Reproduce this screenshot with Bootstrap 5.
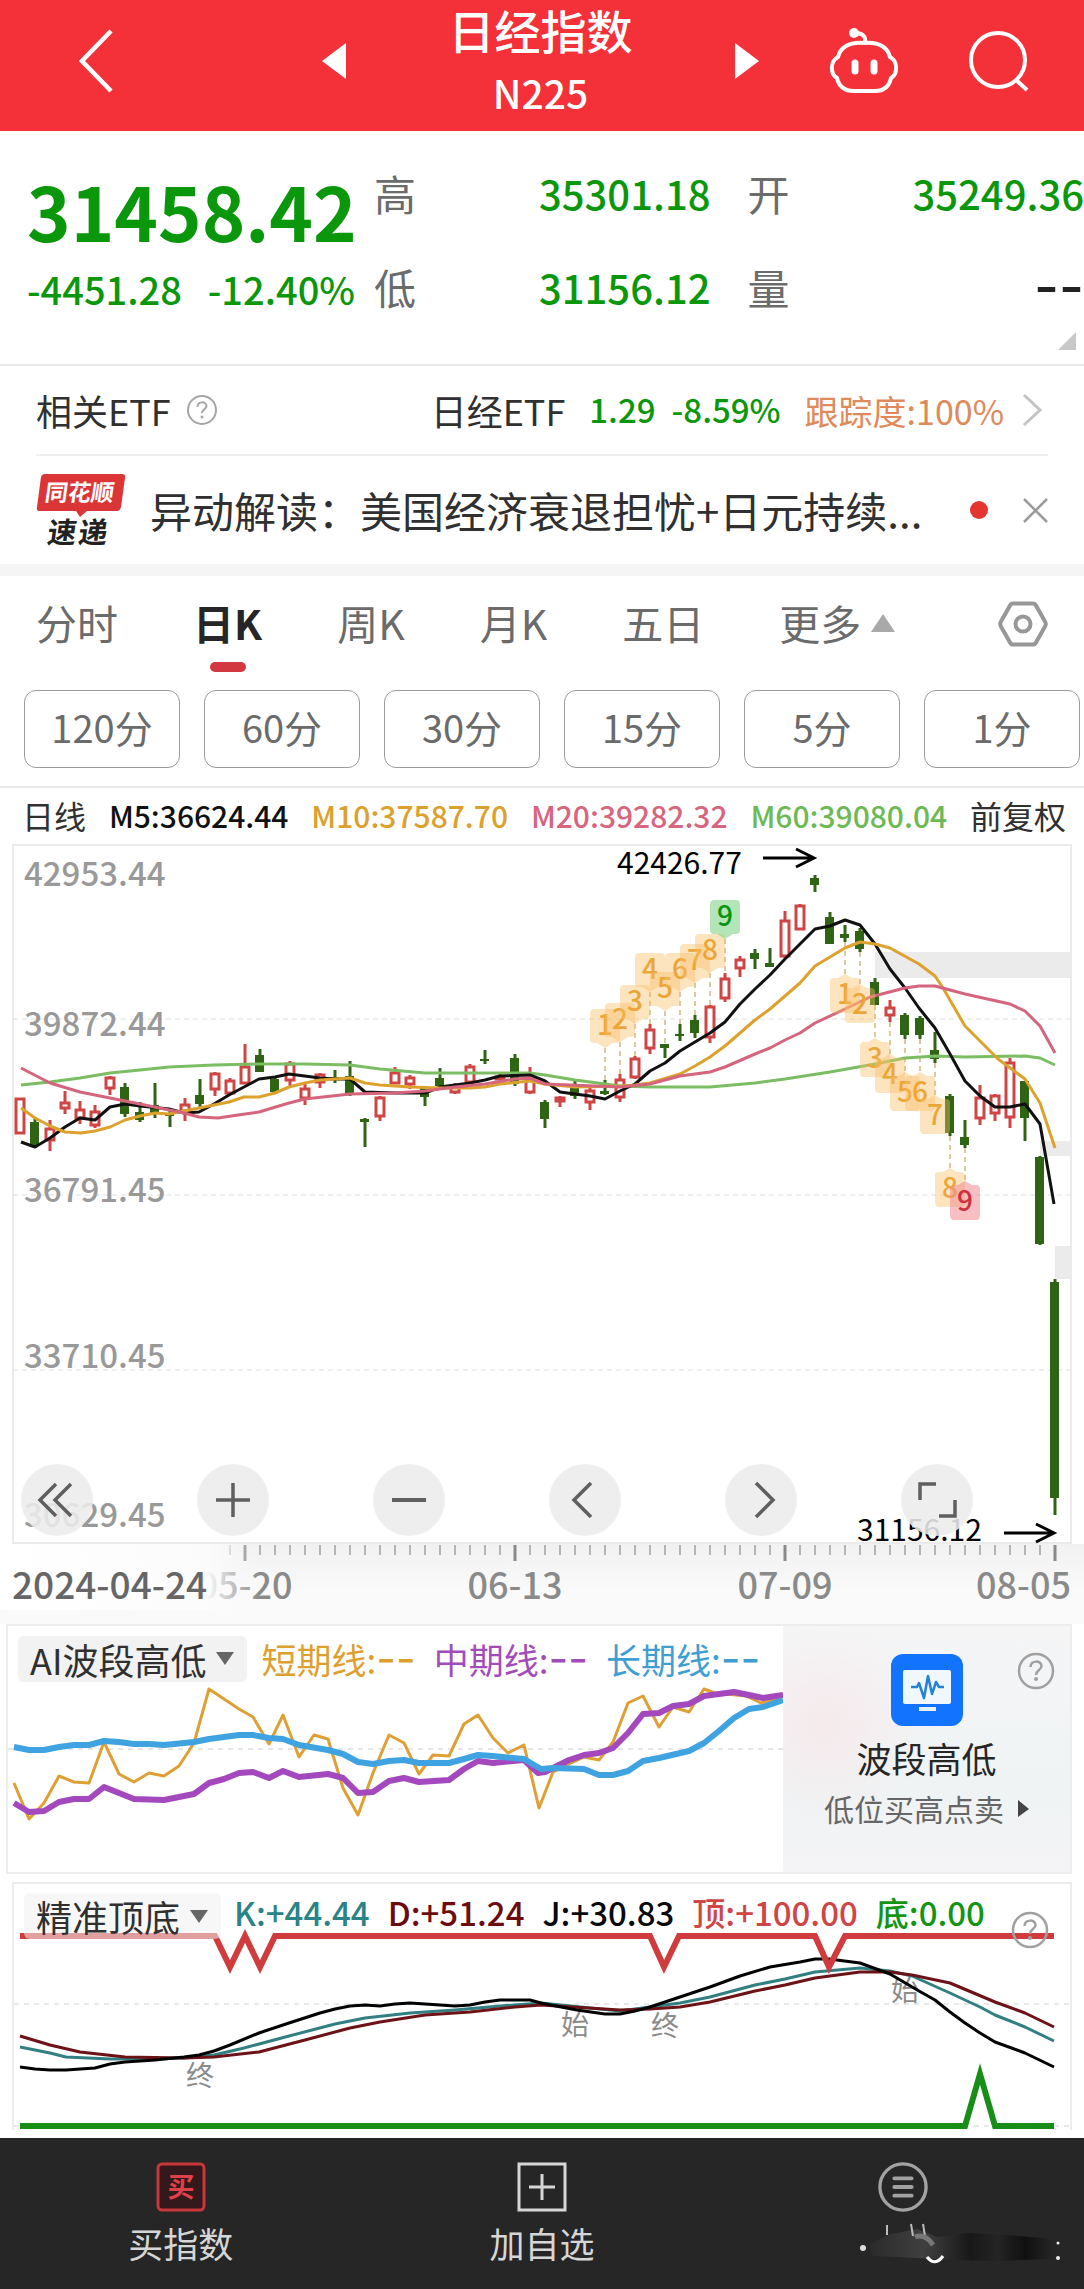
<!DOCTYPE html>
<html lang="zh-CN">
<head>
<meta charset="utf-8">
<meta name="viewport" content="width=device-width, initial-scale=1">
<title>日经指数 N225</title>
<link rel="stylesheet" href="https://cdn.jsdelivr.net/npm/bootstrap@5.3.0/dist/css/bootstrap.min.css">
<style>
:root{--up:#c9403f;--down:#0b970b;--ink:#303030;--soft:#6b6b6b;--rule:#e9e9e9}
body{font-family:"Noto Sans CJK SC","Noto Sans",sans-serif;color:var(--ink);background:#fff}
button{font-family:inherit}
.plain{border:0;background:none;padding:0;color:inherit;display:flex;align-items:center}
svg{display:block}
svg text{font-family:inherit}
.dashes{font-family:Inter,sans-serif;font-size:43px;font-weight:400}

.topbar{background:#f43039;color:#fff;height:131px;padding:0 55px 10px 79px;gap:70px}
.switcher{width:437px}
.idx-title{font-size:46px;line-height:62px;font-weight:500;margin:0}
.idx-code{font-size:39px;line-height:64px;font-weight:500}

.quote{height:235px;border-bottom:2px solid var(--rule);padding:15px 0 0 27px;position:relative}
.quote-left{width:347px}
.price{font-size:74px;line-height:80px;font-weight:700;color:var(--down);padding-top:24px}
.delta{font-size:38px;line-height:78px;font-weight:500;color:var(--down);width:328px}
.cells{gap:0 37px;display:grid;grid-template-columns:1fr 1fr;align-content:start}
.cell{line-height:94px;height:94px;display:flex;justify-content:space-between}
.cell dt{font-size:42px;font-weight:400;color:var(--soft)}
.cell dd{font-size:40px;font-weight:500;color:var(--down);margin:0}
.cell dd.none{color:#222;font-size:54px;font-weight:500}
.corner{position:absolute;right:8px;bottom:14px}

.etf{height:90px;margin:0 36px;padding-right:4px;font-size:36px;border-bottom:2px solid #f0f0f0;color:var(--ink)}
.etf .figure-num{font-size:33px;font-weight:500;color:var(--down)}
.etf .track{font-size:34px;color:#de8a5a}
.news{height:108px;padding:0 36px}
.headline{font-size:42px;line-height:60px;color:var(--ink);margin-left:24px;text-decoration:none}
.redspot{width:18px;height:18px;border-radius:50%;background:#e43530}
.band{height:12px;background:#f5f5f5}

.tabs{height:114px;padding:0 36px;font-size:41px;color:var(--soft)}
.tabset{gap:75px}
.tabset button{height:100px;padding-bottom:6px;position:relative;gap:10px}
.tabset .on{color:#262626;font-weight:700}
.tabset .on::after{content:"";position:absolute;left:50%;margin-left:-18px;bottom:4px;width:36px;height:10px;border-radius:5px;background:#d2383f}
.gear{height:96px}
.periods{gap:24px;padding:0 4px 18px 24px;border-bottom:2px solid var(--rule)}
.periods button{flex:1;height:78px;border:1px solid #9a9a9a;border-radius:12px;background:#fff;color:var(--soft);font-size:38px;line-height:72px;padding:0 0 4px}

.ma{height:56px;padding:0 18px 2px 22px;font-size:30px;font-weight:500}
.ma .name{font-size:32px;font-weight:400}
.c5{color:#111}.c10{color:#dca12c}.c20{color:#d7657f}.c60{color:#6dba55}
.kchart{position:relative}
.tools{position:absolute;left:21px;right:111px;bottom:8px}
.tools button{width:72px;height:72px;border:0;border-radius:50%;background:rgba(236,236,236,.88);padding:0;display:flex;align-items:center;justify-content:center}
.axis-strip{padding-bottom:14px;background:linear-gradient(#f1f1f1,#fafafa 60%)}

.pane{position:relative;border:2px solid #ededed;background:#fff}
.pane-ai{margin:0 12px 8px 6px}
.pane-ai .trend{flex:1 1 0;min-width:0}
.pane-kdj{margin:0 12px 8px 12px;border-bottom:0}
.legend-row{position:absolute;left:0;right:0;top:9px;padding-left:10px;white-space:nowrap}
.chip{border:0;border-radius:6px;background:rgba(238,238,238,.75);color:var(--ink);font-size:36px;line-height:46px;height:46px;padding:0 13px 0 12px;display:flex;align-items:center;gap:10px}
.chip.fade50{background:rgba(240,240,240,.55)}
.lines{font-size:35px;line-height:46px;gap:18px;margin-left:14px}
.lines2{font-size:33px;line-height:38px;font-weight:500;gap:18px;margin-left:13px}
.promo{flex:0 0 287px;background:radial-gradient(circle at 15% 40%,#f6eaec 0,rgba(246,234,236,0) 35%),linear-gradient(#f5f5f6,#eff3f4 65%,#f4f3f5);position:relative}
.promo a{color:#262626;text-decoration:none;padding-top:28px}
.promo .big{font-size:35px;line-height:52px;margin-top:6px}
.promo .sub{font-size:30px;line-height:48px;color:#666;gap:14px}
.help-ai{position:absolute;right:15px;top:26px}
.help-kdj{position:absolute;right:21px;top:27px}

.dock{background:#262626;height:153px;color:#d6d6d6}
.dock button{flex:1;flex-direction:column;font-size:35px;line-height:44px;padding-top:24px;gap:9px;justify-content:flex-start}
.smear{margin-left:118px}
</style>
<script src="https://cdn.jsdelivr.net/npm/bootstrap@5.3.0/dist/js/bootstrap.bundle.min.js"></script>
</head>
<body>
<header class="topbar d-flex align-items-center">
  <button class="plain me-auto" aria-label="返回"><svg width="34" height="66" viewBox="0 0 34 66"><path d="M32 3 3 33l29 30" fill="none" stroke="#fff" stroke-width="4.5"/></svg></button>
  <div class="switcher d-flex align-items-center justify-content-between">
    <button class="plain" aria-label="上一个"><svg width="24" height="36" viewBox="0 0 24 36"><path d="M24 0v36L0 18z" fill="#fff"/></svg></button>
    <div class="text-center"><h1 class="idx-title">日经指数</h1><div class="idx-code">N225</div></div>
    <button class="plain" aria-label="下一个"><svg width="24" height="36" viewBox="0 0 24 36"><path d="M0 0v36l24-18z" fill="#fff"/></svg></button>
  </div>
  <button class="plain" aria-label="智能助手"><svg width="70" height="66" viewBox="0 0 70 66" fill="none" stroke="#fff" stroke-width="4"><path d="M35 15C21 14 12 18 9 29c-8 4-8 17-1 21 2 9 8 13 17 13h21c9 0 14-4 16-13 7-4 7-17-1-21-3-11-12-15-26-14z"/><path d="M36 15c1-7-2-9-8-10"/><circle cx="25" cy="5" r="5" fill="#fff" stroke="none"/><path d="M26 35v8M45 35v8" stroke-width="7" stroke-linecap="round"/></svg></button>
  <button class="plain" aria-label="搜索"><svg width="60" height="62" viewBox="0 0 60 62" fill="none" stroke="#fff" stroke-width="4"><circle cx="29" cy="30" r="27"/><path d="m46 49 12 11"/></svg></button>
</header>

<section class="quote d-flex">
  <div class="quote-left">
    <div class="price">31458.42</div>
    <div class="delta d-flex justify-content-between"><span>-4451.28</span><span>-12.40%</span></div>
  </div>
  <dl class="cells flex-fill m-0">
    <div class="cell"><dt>高</dt><dd>35301.18</dd></div>
    <div class="cell"><dt>开</dt><dd>35249.36</dd></div>
    <div class="cell"><dt>低</dt><dd>31156.12</dd></div>
    <div class="cell"><dt>量</dt><dd class="none dashes">--</dd></div>
  </dl>
  <svg class="corner" width="18" height="18" viewBox="0 0 18 18"><path d="M18 0v18H0z" fill="#c8c8c8"/></svg>
</section>

<section class="etf d-flex align-items-center">
  <span>相关ETF</span>
  <svg class="ms-3" width="34" height="34" viewBox="0 0 34 34"><circle cx="15" cy="17" r="14" fill="none" stroke="#a5a5a5" stroke-width="2"/><path d="M10.500 14c0-6 9-6 9-1 0 3-4.500 3.500-4.500 7" fill="none" stroke="#a5a5a5" stroke-width="2"/><circle cx="15" cy="24" r="1.500" fill="#a5a5a5"/></svg>
  <span class="ms-auto">日经ETF</span>
  <span class="figure-num ms-4">1.29</span><span class="figure-num ms-3">-8.59%</span>
  <span class="track ms-4">跟踪度:100%</span>
  <svg class="ms-3" width="24" height="34" viewBox="0 0 24 34"><path d="m4 2 16 15L4 32" fill="none" stroke="#c4c4c4" stroke-width="3"/></svg>
</section>

<section class="news d-flex align-items-center">
  <svg width="90" height="74" viewBox="0 0 90 74" role="img" aria-label="同花顺速递">
    <path d="M9 1h77q4 0 3 4l-4 29q-1 4-4 4H51l-7 6-4-6H4q-4 0-3-4L5 4q1-3 4-3z" fill="#dc3537"/>
    <g transform="skewX(-8)"><text x="12" y="28" font-size="23" font-weight="700" fill="#fff">同花顺</text><text x="20" y="70" font-size="29" font-weight="700" fill="#222">速</text><text x="51" y="70" font-size="29" font-weight="700" fill="#222">递</text></g>
  </svg>
  <a href="#" class="headline text-nowrap">异动解读：美国经济衰退担忧+日元持续...</a>
  <span class="redspot ms-auto"></span>
  <button class="plain ms-4" aria-label="关闭"><svg width="36" height="36" viewBox="0 0 36 36"><path d="m12 7 23 23M35 7 12 30" stroke="#9a9a9a" stroke-width="2.500"/></svg></button>
</section>
<div class="band"></div>

<nav class="tabs d-flex align-items-start justify-content-between">
  <div class="tabset d-flex">
    <button class="plain">分时</button><button class="plain on">日K</button><button class="plain">周K</button><button class="plain">月K</button><button class="plain">五日</button>
    <button class="plain">更多<svg width="24" height="18" viewBox="0 0 24 18"><path d="M12 0l12 18H0z" fill="#a9a9a9"/></svg></button>
  </div>
  <button class="plain gear" aria-label="设置"><svg width="50" height="46" viewBox="0 0 50 46" fill="none" stroke="#979797" stroke-width="4"><path d="M15 2.500h20q2 0 3 2l9 16q1.500 2.500 0 5l-9 16q-1 2-3 2H15q-2 0-3-2L3 25.500q-1.500-2.500 0-5l9-16q1-2 3-2z"/><circle cx="25" cy="23" r="7.500"/></svg></button>
</nav>
<div class="periods d-flex">
  <button>120分</button><button>60分</button><button>30分</button><button>15分</button><button>5分</button><button>1分</button>
</div>

<div class="ma d-flex align-items-center justify-content-between text-nowrap">
  <span class="name">日线</span><span class="c5">M5:36624.44</span><span class="c10">M10:37587.70</span><span class="c20">M20:39282.32</span><span class="c60">M60:39080.04</span><span class="name">前复权</span>
</div>

<section class="kchart">
  <svg id="kline" class="w-100" viewBox="0 843 1084 700">
    <rect x="13" y="844" width="1058" height="698" fill="#fff" stroke="#ebebeb" stroke-width="2"/>
    <g fill="#ebebeb"><rect x="875" y="951" width="196" height="26"/><rect x="1040" y="1140" width="31" height="15"/><rect x="1055" y="1245" width="16" height="33"/></g>
    <path d="M13 1018H1071M13 1194H1071M13 1369H1071" stroke="#dedede" stroke-dasharray="5 4"/>
    <g font-size="33" font-weight="500" fill="#999"><text x="24" y="885">42953.44</text><text x="24" y="1035">39872.44</text><text x="24" y="1201">36791.45</text><text x="24" y="1367">33710.45</text><text x="24" y="1526">30629.45</text></g>
    <g id="leaders" stroke="#b9953f" stroke-dasharray="5 4"></g>
    <g id="candles"></g>
    <g fill="none" stroke-width="3" stroke-linejoin="round">
      <polyline stroke="#7bbd62" points="21,1084 50,1081 80,1077 110,1072 140,1069 169,1066 214,1064 259,1063 305,1063 350,1064 380,1068 425,1072 485,1072 530,1072 545,1074 575,1079 620,1085 650,1086 710,1086 755,1082 785,1078 830,1071 875,1063 905,1057 936,1055 965,1056 1025,1055 1040,1057 1055,1064"/>
      <polyline stroke="#111" points="21,1141 35,1146 50,1137 65,1126 80,1117 95,1119 110,1106 125,1103 140,1105 169,1108 184,1112 199,1111 214,1103 229,1094 244,1086 259,1078 275,1076 289,1073 320,1077 335,1078 350,1078 365,1091 395,1092 425,1092 440,1086 470,1082 485,1079 500,1075 530,1074 545,1080 560,1091 575,1093 590,1095 605,1098 620,1090 635,1083 650,1070 665,1062 680,1050 710,1032 725,1021 740,1003 755,988 770,974 785,958 800,943 815,928 830,925 845,919 860,924 875,943 890,968 905,987 919,1007 935,1027 950,1053 965,1080 980,1095 995,1106 1010,1106 1025,1103 1040,1123 1054,1203"/>
      <polyline stroke="#dda22e" points="21,1107 35,1117 50,1125 65,1131 81,1132 95,1130 110,1126 125,1119 140,1115 155,1112 169,1113 184,1110 199,1107 214,1104 229,1101 244,1096 259,1096 275,1092 289,1086 305,1082 320,1079 350,1077 365,1082 380,1084 410,1086 440,1087 470,1087 485,1086 500,1083 530,1080 545,1083 575,1086 620,1085 635,1084 650,1082 680,1073 695,1065 710,1056 725,1045 755,1019 770,1008 800,982 815,965 845,947 860,941 875,943 890,947 919,963 935,975 943,987 965,1025 998,1058 1025,1078 1040,1102 1055,1147"/>
      <polyline stroke="#d4657c" points="21,1067 50,1082 80,1091 110,1097 140,1103 169,1109 184,1112 199,1116 218,1117 238,1114 259,1111 289,1102 305,1098 350,1093 395,1092 425,1090 455,1086 485,1083 515,1078 530,1077 545,1083 620,1086 650,1083 680,1075 710,1071 725,1066 755,1053 770,1047 785,1039 800,1032 815,1022 845,1008 870,996 905,987 919,985 935,985 965,993 1010,1003 1025,1010 1040,1025 1055,1052"/>
    </g>
    <g id="flags" font-size="28" font-weight="500" text-anchor="middle"></g>
    <g font-size="30" fill="#000"><text x="617" y="873">42426.77</text><text x="857" y="1540">31156.12</text></g>
    <path d="M763 857h50M796 848l18 9-18 9M1004 1532h48M1036 1523l18 9-18 9" fill="none" stroke="#000" stroke-width="3"/>
  </svg>
  <div class="tools d-flex justify-content-between">
    <button aria-label="最早"><svg width="40" height="40" viewBox="0 0 40 40" fill="none" stroke="#5f5f5f" stroke-width="3.500"><path d="M19 4 3 20l16 16M34 4 18 20l16 16"/></svg></button>
    <button aria-label="放大"><svg width="40" height="40" viewBox="0 0 40 40" stroke="#5f5f5f" stroke-width="3.500"><path d="M3 20h34M20 3v34"/></svg></button>
    <button aria-label="缩小"><svg width="40" height="40" viewBox="0 0 40 40" stroke="#5f5f5f" stroke-width="4"><path d="M3 20h34"/></svg></button>
    <button aria-label="左移"><svg width="40" height="40" viewBox="0 0 40 40" fill="none" stroke="#5f5f5f" stroke-width="3.500"><path d="M26 3 9 20l17 17"/></svg></button>
    <button aria-label="右移"><svg width="40" height="40" viewBox="0 0 40 40" fill="none" stroke="#5f5f5f" stroke-width="3.500"><path d="m15 3 17 17-17 17"/></svg></button>
    <button aria-label="全屏"><svg width="40" height="40" viewBox="0 0 40 40" fill="none" stroke="#5f5f5f" stroke-width="3.500"><path d="M3 20V4h16M38 20v16H22"/></svg></button>
  </div>
</section>
<div class="axis-strip">
  <svg id="axis" class="w-100" viewBox="0 1543 1084 66">
    <defs><linearGradient id="veil"><stop offset="0" stop-color="#fff"/><stop offset=".8" stop-color="#fcfcfc" stop-opacity=".95"/><stop offset="1" stop-color="#f8f8f8" stop-opacity="0"/></linearGradient></defs>
    <g id="ticks" stroke="#b5b5b5" stroke-width="2"></g>
    <g font-size="36" font-weight="500" fill="#8a8a8a" text-anchor="middle"><text x="245" y="1598">05-20</text><text x="515" y="1598">06-13</text><text x="785" y="1598">07-09</text><text x="1071" y="1598" text-anchor="end">08-05</text></g>
    <rect x="0" y="1543" width="260" height="66" fill="url(#veil)"/>
    <text x="12" y="1598" font-size="37" font-weight="500" fill="#666">2024-04-24</text>
  </svg>
</div>

<section class="pane pane-ai d-flex">
  <svg class="trend" viewBox="8 1626 775 246">
    <path d="M8 1749H783" stroke="#e6e6ea" stroke-dasharray="5 5" stroke-width="2"/>
    <g fill="none" stroke-linejoin="round">
      <polyline stroke="#de9f35" stroke-width="3" points="14,1783 29,1819 44,1803 59,1776 74,1782 89,1783 104,1742 119,1774 134,1782 149,1773 164,1776 179,1766 194,1743 209,1689 239,1709 253,1717 269,1744 283,1715 299,1757 314,1735 328,1739 343,1788 358,1815 373,1773 389,1735 404,1743 419,1774 433,1755 449,1756 464,1724 478,1715 493,1738 508,1753 524,1745 539,1808 553,1772 569,1764 584,1757 599,1760 613,1742 628,1703 643,1696 659,1727 673,1707 689,1712 704,1689 715,1693 746,1696 761,1703 783,1697"/>
      <polyline stroke="#a349bd" stroke-width="6" points="14,1803 29,1812 44,1811 59,1802 74,1799 89,1799 104,1787 119,1793 134,1799 164,1800 194,1794 209,1783 224,1779 239,1773 253,1772 269,1778 283,1771 299,1777 328,1774 343,1778 358,1793 373,1792 389,1781 404,1778 419,1782 449,1780 464,1769 478,1761 493,1763 524,1760 538,1773 545,1772 569,1760 584,1755 599,1753 613,1748 628,1733 643,1714 659,1713 673,1706 689,1704 704,1696 734,1692 749,1695 763,1698 783,1695"/>
      <polyline stroke="#3ea3e0" stroke-width="6" points="14,1747 29,1750 44,1750 59,1747 74,1745 89,1745 104,1741 119,1742 134,1744 149,1744 164,1745 194,1742 209,1739 239,1735 253,1735 269,1738 283,1739 299,1745 328,1750 343,1754 358,1762 373,1764 389,1761 404,1760 419,1763 449,1763 464,1759 478,1755 493,1756 524,1759 541,1769 553,1768 584,1769 599,1775 613,1775 628,1771 643,1761 659,1758 689,1751 704,1743 719,1731 734,1718 749,1709 763,1707 783,1700"/>
    </g>
  </svg>
  <div class="legend-row d-flex align-items-center">
    <button class="chip">AI波段高低<svg width="18" height="13" viewBox="0 0 18 13"><path d="M0 0h18L9 13z" fill="#666"/></svg></button>
    <div class="lines d-flex"><span style="color:#dda02f">短期线:<span class="dashes">--</span></span><span style="color:#a24cba">中期线:<span class="dashes">--</span></span><span style="color:#3f9ed2">长期线:<span class="dashes">--</span></span></div>
  </div>
  <div class="promo">
    <a href="#" class="d-flex flex-column align-items-center text-nowrap">
      <svg width="72" height="72" viewBox="0 0 72 72"><rect width="72" height="72" rx="12" fill="#1273ff"/><rect x="12" y="16" width="48" height="34" rx="2" fill="#f1f8fd"/><path d="M20 33h6l2-4 5 15 4-22 4 18 4-12 3 5h5" fill="none" stroke="#2382d8" stroke-width="2.500" stroke-linejoin="round"/><rect x="28" y="53" width="17" height="4" fill="#e6f1ff"/></svg>
      <span class="big">波段高低</span>
      <span class="sub d-flex align-items-center">低位买高点卖<svg width="11" height="17" viewBox="0 0 11 17"><path d="M0 0v17L11 9z" fill="#444"/></svg></span>
    </a>
    <svg class="help-ai" width="38" height="38" viewBox="0 0 38 38"><circle cx="19" cy="19" r="17" fill="none" stroke="#a0a0a0" stroke-width="2.500"/><path d="M13.500 15c0-7 11-7 11-1 0 4-5.500 4-5.500 9" fill="none" stroke="#a0a0a0" stroke-width="2.500"/><circle cx="19" cy="27" r="2" fill="#a0a0a0"/></svg>
  </div>
</section>

<section class="pane pane-kdj">
  <svg class="w-100" viewBox="14 1884 1056 246">
    <path d="M14 2004H1070M14 2126H1070" stroke="#e8e8e8" stroke-dasharray="5 5" stroke-width="2"/>
    <g font-size="28" fill="#8b8b8b" text-anchor="middle"><text x="200" y="2086">终</text><text x="575" y="2035">始</text><text x="665" y="2036">终</text><text x="905" y="2001">始</text></g>
    <g fill="none" stroke-width="3" stroke-linejoin="round">
      <polyline stroke="#327f82" points="20,2047 50,2053 66,2057 110,2059 140,2059 184,2058 214,2055 244,2048 289,2036 335,2024 365,2018 410,2013 455,2010 500,2006 541,2003 620,2011 650,2007 680,2003 710,1997 755,1985 785,1979 815,1972 860,1968 890,1971 912,1976 950,1993 980,2007 995,2015 1025,2027 1054,2041"/>
      <polyline stroke="#6d1216" points="20,2036 50,2045 80,2052 125,2057 184,2058 214,2057 259,2052 305,2040 350,2028 380,2022 425,2015 470,2012 515,2007 541,2005 620,2010 650,2009 680,2007 710,2002 755,1991 785,1985 815,1978 860,1972 890,1972 912,1975 950,1983 995,2002 1025,2013 1054,2027"/>
      <polyline stroke="#000" points="20,2067 35,2069 50,2070 66,2070 95,2068 110,2064 125,2062 155,2060 184,2057 199,2055 214,2051 230,2045 259,2033 289,2023 320,2013 335,2009 350,2006 365,2005 380,2006 395,2004 410,2003 440,2005 455,2006 470,2005 485,2002 500,2000 530,2000 541,2003 556,2006 577,2010 605,2014 620,2014 635,2011 650,2007 680,1997 710,1987 740,1976 770,1967 800,1962 815,1959 829,1959 860,1963 890,1974 919,1991 935,2000 950,2012 965,2023 980,2033 995,2042 1025,2053 1054,2067"/>
    </g>
    <polyline fill="none" stroke="#d03c3d" stroke-width="6" points="20,1936 215,1936 230,1967 245,1936 260,1967 275,1936 650,1936 664,1967 679,1936 815,1936 829,1967 845,1936 1054,1936"/>
    <polyline fill="none" stroke="#188d18" stroke-width="6" points="20,2126 965,2126 980,2074 995,2126 1054,2126"/>
  </svg>
  <div class="legend-row d-flex align-items-start">
    <button class="chip fade50">精准顶底<svg width="18" height="13" viewBox="0 0 18 13"><path d="M0 0h18L9 13z" fill="#666"/></svg></button>
    <div class="lines2 d-flex"><span style="color:#2a8486">K:+44.44</span><span style="color:#6b0d0f">D:+51.24</span><span style="color:#0a0a0a">J:+30.83</span><span style="color:#d04545">顶:+100.00</span><span style="color:#139413">底:0.00</span></div>
  </div>
  <svg class="help-kdj" width="38" height="38" viewBox="0 0 38 38"><circle cx="19" cy="19" r="17" fill="none" stroke="#a0a0a0" stroke-width="2.500"/><path d="M13.500 15c0-7 11-7 11-1 0 4-5.500 4-5.500 9" fill="none" stroke="#a0a0a0" stroke-width="2.500"/><circle cx="19" cy="27" r="2" fill="#a0a0a0"/></svg>
</section>

<footer class="dock d-flex align-items-stretch">
  <button class="plain"><svg width="50" height="50" viewBox="0 0 50 50"><rect x="2" y="2" width="46" height="46" rx="4" fill="#33191b" stroke="#c8373b" stroke-width="3"/><text x="25" y="35" font-size="27" font-weight="700" text-anchor="middle" fill="#e04048">买</text></svg>买指数</button>
  <button class="plain"><svg width="50" height="50" viewBox="0 0 50 50" fill="none" stroke="#d6d6d6" stroke-width="3"><rect x="2" y="2" width="46" height="46"/><path d="M12 25h26M25 12v26"/></svg>加自选</button>
  <button class="plain" aria-label="更多"><svg width="50" height="50" viewBox="0 0 52 52" fill="none" stroke="#a2a2a2" stroke-width="3.500"><circle cx="26" cy="26" r="24"/><path d="M17 17h18M17 26h18M17 35h18" stroke-width="4" stroke-linecap="round"/></svg>
    <svg class="smear" width="210" height="44" viewBox="0 0 210 44"><defs><linearGradient id="smear"><stop offset="0" stop-color="#2a2a2a"/><stop offset=".3" stop-color="#404040"/><stop offset=".55" stop-color="#181818"/><stop offset=".7" stop-color="#242424"/><stop offset=".85" stop-color="#101010"/><stop offset="1" stop-color="#262626"/></linearGradient></defs><path d="M12 24 30 14l30-6 20 8 30-4 40 2 46 4v20l-60 2-40-1-36-2-44-2z" fill="url(#smear)"/><path d="M30 4v10M54 3l2 12M66 3l2 12" stroke="#bbb" stroke-width="2"/><circle cx="6" cy="27" r="3" fill="#ddd"/><path d="M70 36q8 10 16-1" fill="none" stroke="#fff" stroke-width="3"/><path d="M58 16q10-4 18 8" fill="none" stroke="#777" stroke-width="5"/><circle cx="201" cy="22" r="1.500" fill="#eee"/><circle cx="201" cy="37" r="2" fill="#eee"/></svg>
  </button>
</footer>

<script>
// Daily bars: direction, then high / body top / body bottom / low in chart units
const bars = `r1097,1097,1133,1133 g1118,1121,1145,1147 r1119,1127,1140,1150 r1090,1101,1108,1113 r1100,1108,1118,1123 r1104,1110,1125,1127 r1075,1076,1088,1094 g1082,1086,1113,1116 g1101,1111,1119,1121 g1082,1104,1113,1117
g1110,1113,1114,1126 r1097,1103,1111,1120 g1078,1094,1103,1107 r1071,1072,1089,1095 r1077,1079,1093,1094 r1043,1065,1083,1083 g1048,1054,1071,1071 g1077,1078,1091,1091 r1060,1062,1080,1086 r1082,1087,1098,1104
r1072,1073,1082,1087 g1069,1076,1078,1082 g1060,1075,1093,1095 g1117,1118,1121,1146 r1095,1096,1116,1120 r1066,1071,1083,1083 r1074,1076,1084,1088 g1085,1087,1096,1105 g1067,1077,1085,1086 r1082,1085,1092,1093
r1063,1065,1082,1083 g1049,1058,1060,1063 r1073,1075,1078,1079 g1053,1057,1083,1085 r1066,1078,1092,1093 g1099,1101,1118,1127 r1095,1096,1101,1106 g1080,1087,1095,1098 r1084,1089,1102,1109 g1079,1090,1093,1094
r1073,1078,1097,1101 r1055,1057,1077,1078 r1023,1028,1048,1053 g1043,1043,1047,1057 g1023,1033,1035,1040 g1014,1019,1032,1037 r1004,1005,1037,1042 r972,977,998,1001 r955,958,968,976 g948,952,958,968
g947,962,966,966 r910,919,956,957 r903,904,929,929 g874,877,884,891 g911,916,943,943 g924,933,937,941 g927,930,948,951 g977,981,1004,1004 r999,1006,1015,1021 g1012,1014,1034,1038
g1015,1017,1034,1038 g1031,1049,1058,1062 g1093,1095,1132,1135 g1119,1136,1144,1147 r1084,1096,1118,1124 r1093,1094,1113,1120 r1057,1061,1117,1127 g1080,1080,1117,1140 g1155,1156,1243,1244 g1278,1281,1497,1514`
  .split(/\s+/).map(s => [s[0], ...s.slice(1).split(',').map(Number)]);
const cx = i => 20 + 15 * i;
document.getElementById('candles').innerHTML = bars.map(([d, h, t, b, l], i) => {
  const x = cx(i), c = d === 'r' ? '#cf4444' : '#2f6414';
  const wick = `<path d="M${x} ${h}V${t}M${x} ${b}V${l}" stroke="${c}" stroke-width="3"/>`;
  return wick + (d === 'r'
    ? `<rect x="${x - 4}" y="${t + 1}" width="8" height="${Math.max(b - t - 2, 2)}" fill="#fff" stroke="${c}" stroke-width="3"/>`
    : `<rect x="${x - 5}" y="${t}" width="9" height="${Math.max(b - t, 2)}" fill="${c}"/>`);
}).join('');

// Nine-turn counters: bar index, digit, top of the flag, 'd' points down and 'u' points up
const flags = [[39,1,1008,'d'],[40,2,1002,'d'],[41,3,984,'d'],[42,4,952,'d'],[43,5,971,'d'],[44,6,952,'d'],[45,7,943,'d'],[46,8,933,'d'],[47,9,899,'d'],
  [55,1,973,'u'],[56,2,983,'u'],[57,3,1037,'u'],[58,4,1053,'u'],[59,5,1071,'u'],[60,6,1071,'u'],[61,7,1094,'u'],[62,8,1167,'u'],[63,9,1180,'u']];
let flagMarkup = '', leaderMarkup = '';
flags.forEach(([i, n, y, dir]) => {
  const x = cx(i), nine = n === 9, up = dir === 'u';
  const bg = nine ? (up ? '#f08a90' : '#77cf7d') : '#f9be66';
  const fg = nine ? (up ? '#cf2f3c' : '#079410') : '#eba637';
  const shape = up
    ? `M${x} ${y}l7 4h4q4 0 4 4v26q0 5-4 5h-22q-4 0-4-5v-26q0-4 4-4h4z`
    : `M${x} ${y + 39}l-8-5h-3q-4 0-4-4v-25q0-5 4-5h22q4 0 4 5v25q0 4-4 4h-3z`;
  flagMarkup += `<path d="${shape}" fill="${bg}" fill-opacity="${nine ? .55 : .42}"/><text x="${x}" y="${y + (up ? 30 : 26)}" fill="${fg}">${n}</text>`;
  leaderMarkup += up ? `<path d="M${x} ${bars[i][4]}V${y}"/>` : `<path d="M${x} ${y + 39}V${bars[i][1]}"/>`;
});
document.getElementById('flags').innerHTML = flagMarkup;
document.getElementById('leaders').innerHTML = leaderMarkup;

let ticks = '';
for (let i = 14; i < 70; i++) {
  const major = [15, 33, 51, 69].includes(i);
  ticks += `<path d="M${cx(i)} 1544v${major ? 16 : 10}"${major ? ' stroke="#8a8a8a" stroke-width="3"' : ''}/>`;
}
document.getElementById('ticks').innerHTML = ticks;
</script>
</body>
</html>
